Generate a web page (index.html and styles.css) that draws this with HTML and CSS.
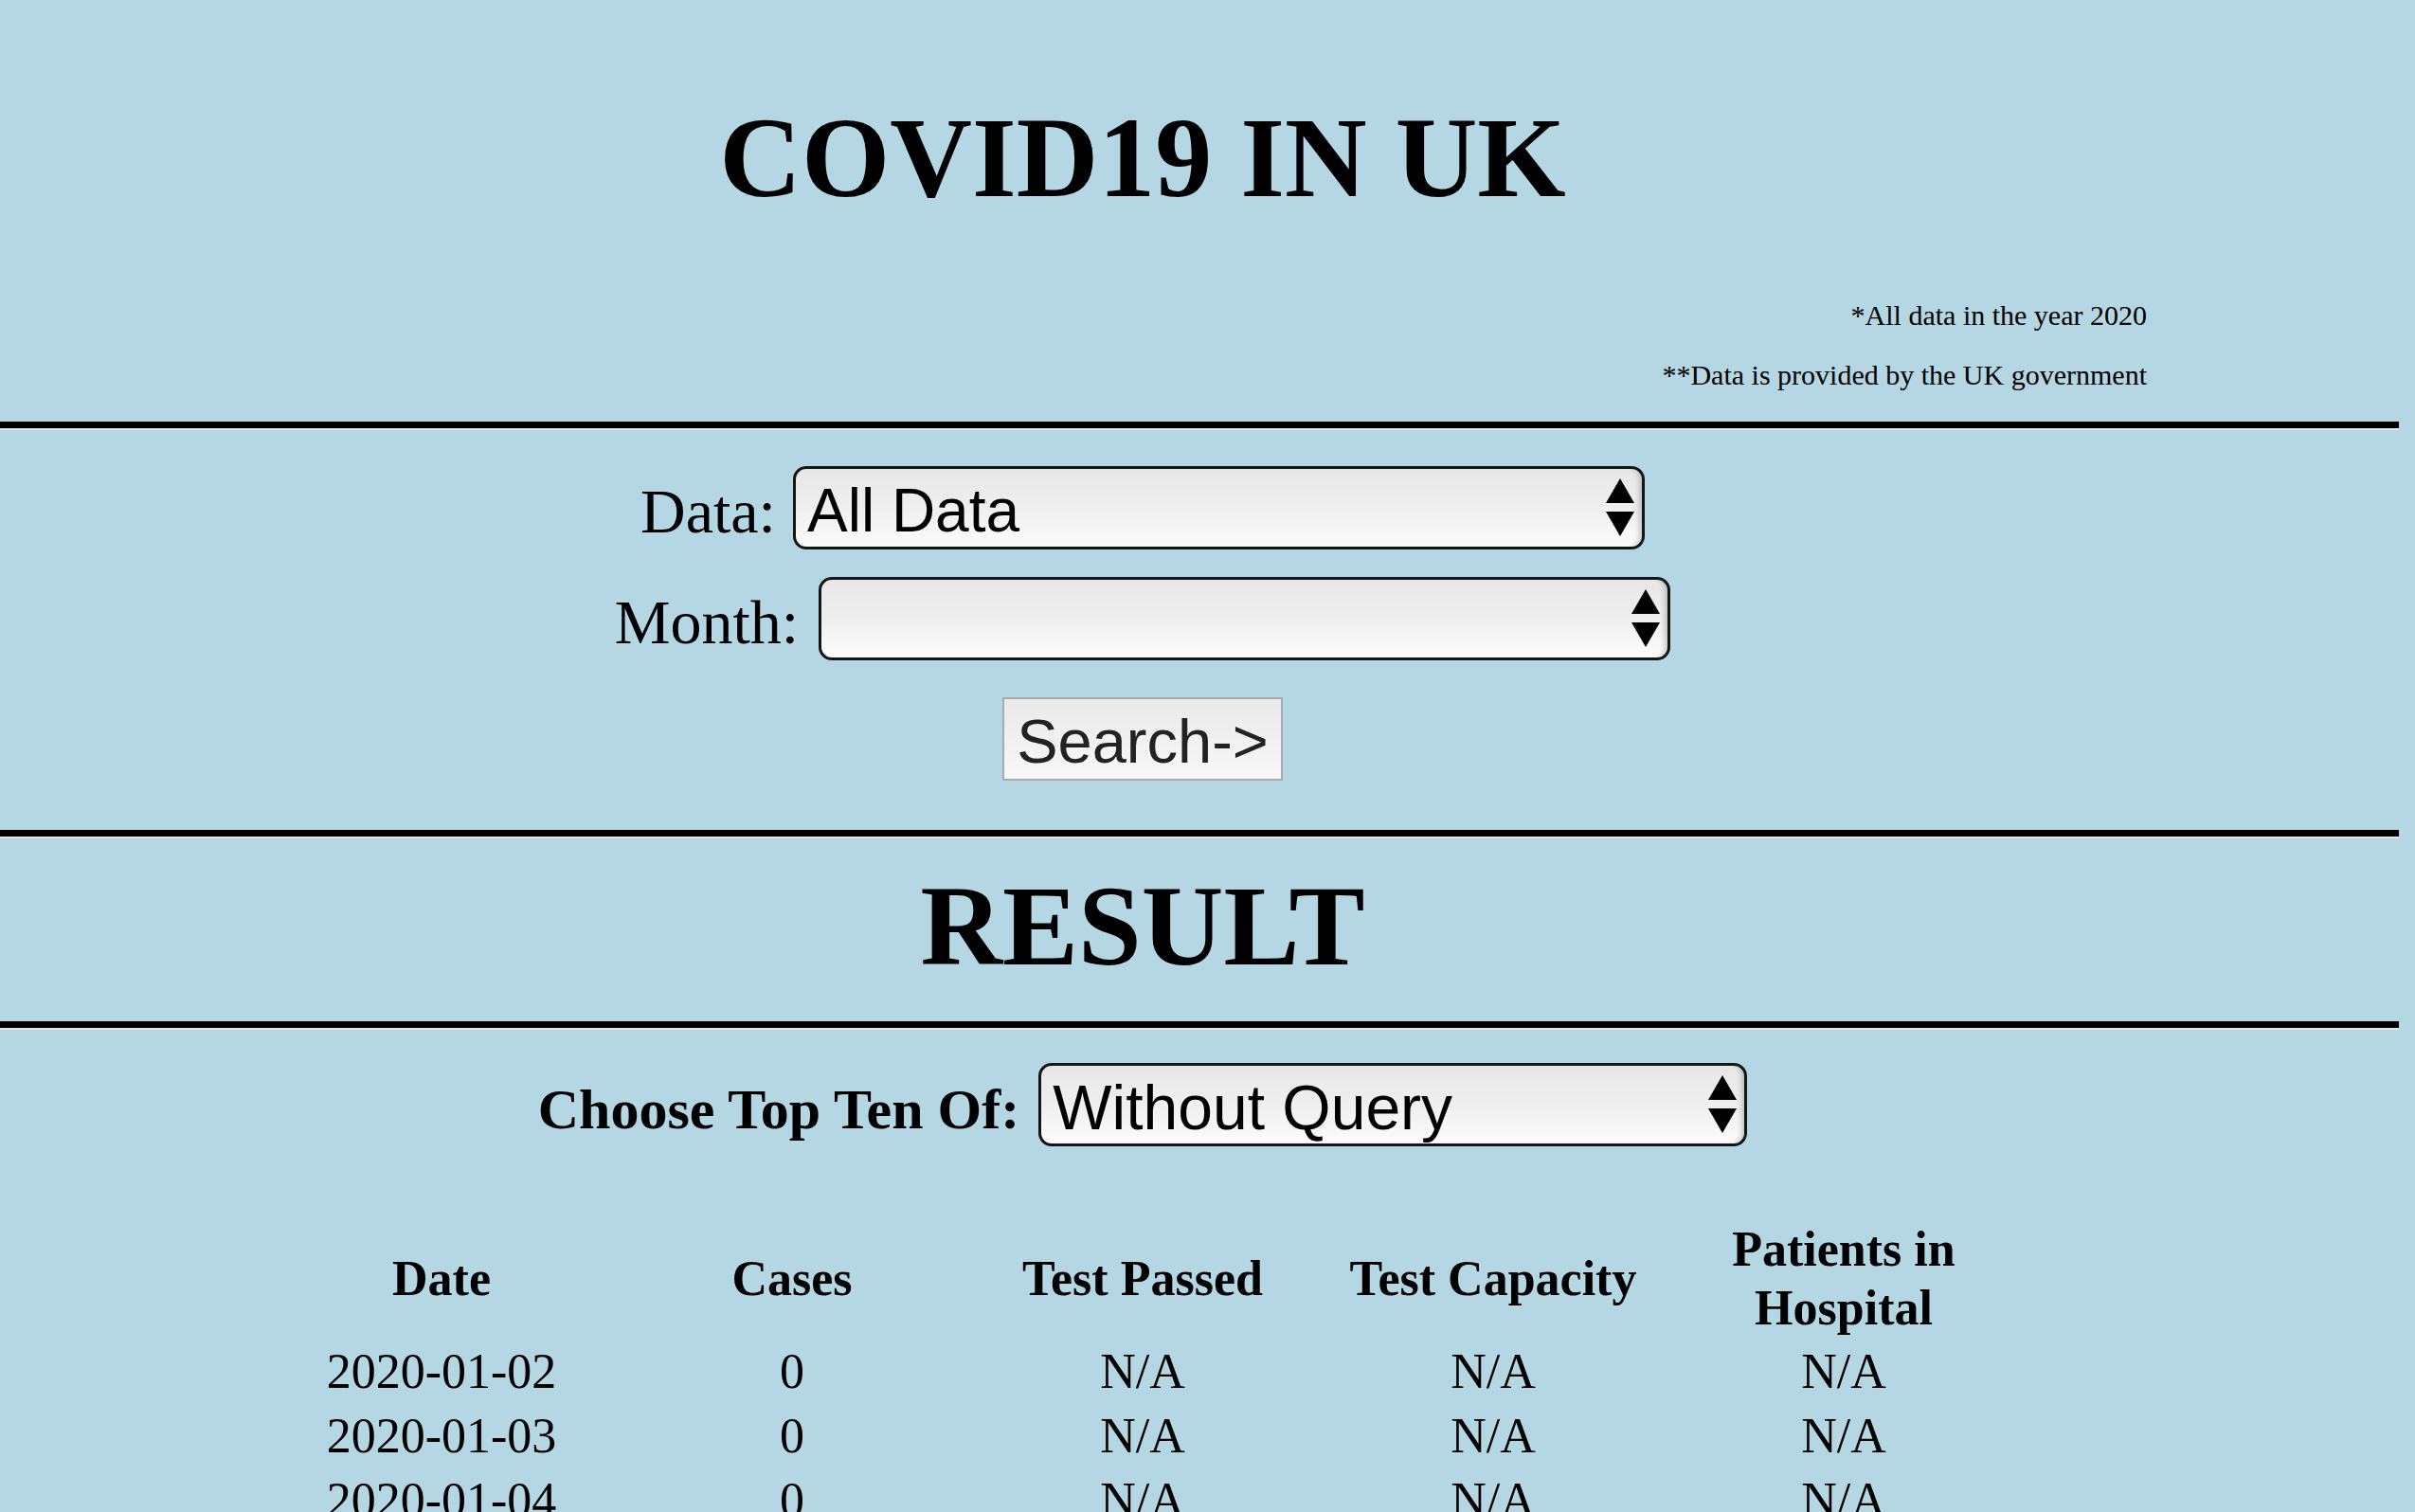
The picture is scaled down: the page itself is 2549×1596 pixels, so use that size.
FILE: index.html
```html
<!DOCTYPE html>
<html lang="en">
<head>
<meta charset="utf-8">
<title>COVID19 IN UK</title>
<link rel="stylesheet" href="styles.css">
</head>
<body>
<header class="col">
  <h1 class="title">COVID19 IN UK</h1>
  <div class="notes">
    <p class="note note-first">*All data in the year 2020</p>
    <p class="note">**Data is provided by the UK government</p>
  </div>
</header>
<hr class="rule rule-first">
<form class="col query">
  <div class="field field-data">
    <label class="label">Data:</label>
    <div class="select-wrap">
      <select class="select select-data"><option>All Data</option></select>
      <svg class="arrows" viewBox="0 0 30 61" width="30" height="61"><polygon points="15,0 30,26 0,26"/><polygon points="0,35 30,35 15,61"/></svg>
    </div>
  </div>
  <div class="field field-month">
    <label class="label">Month:</label>
    <div class="select-wrap">
      <select class="select select-month"><option></option></select>
      <svg class="arrows" viewBox="0 0 30 61" width="30" height="61"><polygon points="15,0 30,26 0,26"/><polygon points="0,35 30,35 15,61"/></svg>
    </div>
  </div>
  <div class="actions">
    <button type="button" class="search">Search-&gt;</button>
  </div>
</form>
<hr class="rule rule-second">
<h2 class="col result">RESULT</h2>
<hr class="rule rule-third">
<section class="col results">
  <div class="field field-choose">
    <label class="label label-bold">Choose Top Ten Of:</label>
    <div class="select-wrap">
      <select class="select select-choose"><option>Without Query</option></select>
      <svg class="arrows" viewBox="0 0 30 61" width="30" height="61"><polygon points="15,0 30,26 0,26"/><polygon points="0,35 30,35 15,61"/></svg>
    </div>
  </div>
  <table class="data">
    <thead>
      <tr><th>Date</th><th>Cases</th><th>Test Passed</th><th>Test Capacity</th><th>Patients in Hospital</th></tr>
    </thead>
    <tbody>
      <tr><td>2020-01-02</td><td>0</td><td>N/A</td><td>N/A</td><td>N/A</td></tr>
      <tr><td>2020-01-03</td><td>0</td><td>N/A</td><td>N/A</td><td>N/A</td></tr>
      <tr><td>2020-01-04</td><td>0</td><td>N/A</td><td>N/A</td><td>N/A</td></tr>
    </tbody>
  </table>
</section>
</body>
</html>
```
FILE: styles.css
```css
html, body {
  margin: 0;
  padding: 0;
}
body {
  background: #b5d7e3;
  color: #000;
  font-family: "Liberation Serif", "Times New Roman", serif;
  overflow: hidden;
}
.col {
  width: 2412px;
  box-sizing: border-box;
}
.title {
  margin: 0;
  padding-top: 97px;
  font-size: 120px;
  line-height: 140px;
  font-weight: bold;
  text-align: center;
}
.notes {
  padding-right: 146px;
  text-align: right;
  margin-top: 79px;
}
.note {
  margin: 29px 0 0;
  font-size: 30px;
  line-height: 34px;
}
.note-first {
  margin-top: 0;
}
.rule {
  width: 2532px;
  height: 7px;
  margin: 0;
  border: 0;
  border-bottom: 2px solid #e4e6e6;
  background: #000;
}
.rule-first {
  margin-top: 32px;
}
.query {
  padding-top: 38px;
  display: flex;
  flex-direction: column;
  align-items: center;
}
.field {
  display: flex;
  align-items: center;
  justify-content: center;
  gap: 18px;
}
.field-month {
  margin-top: 29px;
  gap: 21px;
}
.label {
  font-size: 66px;
  line-height: 76px;
  padding-top: 8px;
}
.label-bold {
  font-weight: bold;
  font-size: 60px;
  padding-top: 9px;
}
.select-wrap {
  position: relative;
  display: flex;
}
.select {
  appearance: none;
  -webkit-appearance: none;
  box-sizing: border-box;
  height: 88px;
  margin: 0;
  padding: 6px 60px 0 12px;
  border: 3px solid #151515;
  border-radius: 14px;
  background: linear-gradient(to bottom, #e7e7e7 0%, #f0f0f0 55%, #fcfcfc 100%);
  box-shadow: inset -7px 0 6px -5px rgba(0, 0, 0, 0.25);
  color: #000;
  font-family: "Liberation Sans", Arial, sans-serif;
  font-size: 64px;
}
.select-data,
.select-month {
  width: 899px;
}
.select-choose {
  width: 748px;
  font-size: 66px;
}
.arrows {
  position: absolute;
  right: 11px;
  top: 13px;
  fill: #000;
}
.actions {
  margin-top: 39px;
}
.search {
  box-sizing: border-box;
  width: 296px;
  height: 88px;
  margin: 0;
  padding: 6px 0 0;
  border: 2px solid #ababab;
  border-radius: 0;
  background: linear-gradient(to bottom, #e9e9e9, #f8f8f8);
  color: #222;
  font-family: "Liberation Sans", Arial, sans-serif;
  font-size: 65px;
  line-height: 78px;
}
.rule-second {
  margin-top: 52px;
}
.result {
  margin: 23px 0 0;
  font-size: 120px;
  line-height: 140px;
  font-weight: bold;
  text-align: center;
}
.rule-third {
  margin-top: 30px;
}
.results {
  padding-top: 35px;
  display: flex;
  flex-direction: column;
  align-items: center;
}
.field-choose {
  gap: 20px;
}
.data {
  margin-top: 76px;
  width: 1850px;
  table-layout: fixed;
  border-collapse: collapse;
  text-align: center;
}
.data th {
  padding: 2px 0;
  font-size: 52px;
  line-height: 62px;
  font-weight: bold;
  vertical-align: middle;
}
.data th:last-child {
  padding: 2px 40px;
}
.data td {
  padding: 0;
  font-size: 52px;
  line-height: 68px;
}
```
